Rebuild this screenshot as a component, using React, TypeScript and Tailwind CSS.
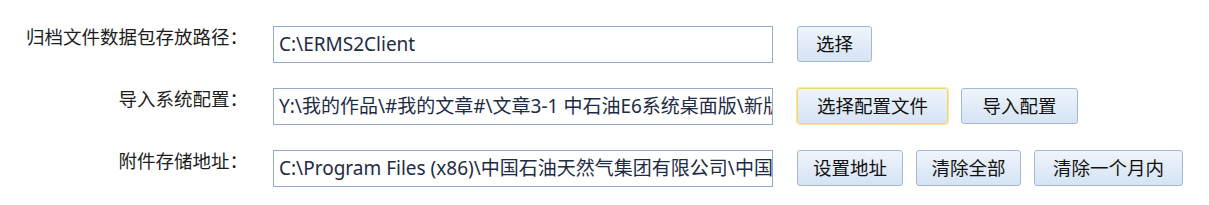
import React from "react";

const font = { fontFamily: '"Noto Sans", "Noto Sans CJK SC", sans-serif' };

function Btn({ children, w, focused }: { children: React.ReactNode; w: string; focused?: boolean }) {
  return (
    <button
      className={
        "h-[36px] rounded-[3px] border bg-gradient-to-b from-[#eef4fc] to-[#d5e3f3] text-[18.5px] text-[#111] leading-none flex items-center justify-center " +
        w +
        (focused ? " border-[#f3d36b] shadow-[0_0_0_1px_#fbe7a0]" : " border-[#a4b8d2]")
      }
    >
      {children}
    </button>
  );
}

function Row({ label, value, children }: { label: string; value: string; children: React.ReactNode }) {
  return (
    <div className="flex items-start">
      <div className="w-[250px] pr-[2px] text-right text-[18.5px] text-[#1c1c1c] leading-none pt-[2px] whitespace-nowrap">
        {label}
      </div>
      <div className="ml-[23px] w-[500px] h-[37px] border border-[#93abc9] bg-white flex items-center px-[5px] overflow-hidden">
        <span className="whitespace-nowrap text-[19px] text-[#1d2b45] leading-none">{value}</span>
      </div>
      <div className="ml-[24px] flex gap-[13px]">{children}</div>
    </div>
  );
}

export default function App() {
  return (
    <div className="w-[1209px] h-[205px] bg-white pt-[26px] flex flex-col gap-[25px]" style={font}>
      <Row label="归档文件数据包存放路径：" value="C:\ERMS2Client">
        <Btn w="w-[75px]">选择</Btn>
      </Row>
      <Row label="导入系统配置：" value="Y:\我的作品\#我的文章#\文章3-1 中石油E6系统桌面版\新版">
        <Btn w="w-[151px]" focused>
          选择配置文件
        </Btn>
        <Btn w="w-[117px]">导入配置</Btn>
      </Row>
      <Row label="附件存储地址：" value="C:\Program Files (x86)\中国石油天然气集团有限公司\中国石油">
        <Btn w="w-[106px]">设置地址</Btn>
        <Btn w="w-[105px]">清除全部</Btn>
        <Btn w="w-[149px]">清除一个月内</Btn>
      </Row>
    </div>
  );
}
